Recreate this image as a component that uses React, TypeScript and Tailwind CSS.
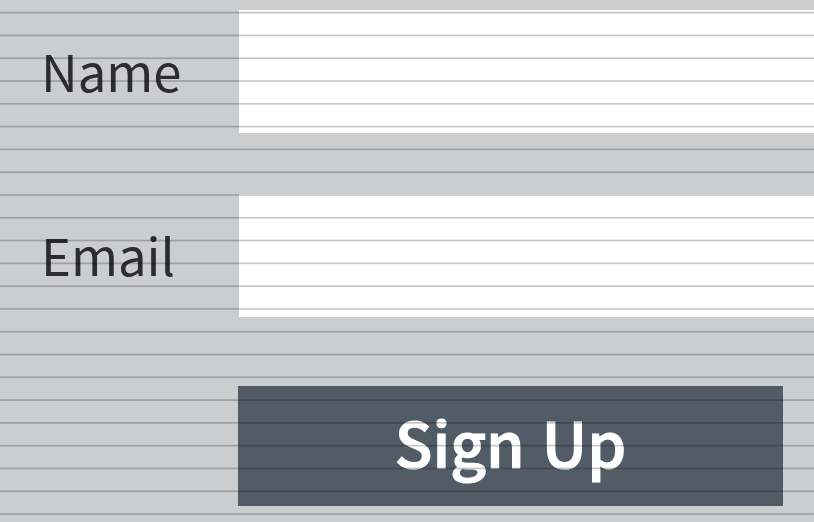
const labelClass =
  "flex w-[239px] shrink-0 items-center pb-[3px] pl-[41px] text-[50.8px] leading-none text-[#2d2d30]";

function Field({ id, label, className }: { id: string; label: string; className: string }) {
  return (
    <div className={`flex ${className}`}>
      <label htmlFor={id} className={labelClass}>
        {label}
      </label>
      <input id={id} type="text" className="min-w-0 flex-1 bg-white outline-none" />
    </div>
  );
}

export default function App() {
  return (
    <div className="relative h-[522px] w-[814px] overflow-hidden bg-[#cccdcf] font-['Noto_Sans_CJK_SC','Noto_Sans',sans-serif]">
      <form className="flex flex-col pt-[10px]">
        <Field id="name" label="Name" className="h-[123px]" />
        <Field id="email" label="Email" className="mt-[61px] h-[123px]" />
        <button
          type="button"
          className="mt-[69px] ml-[238px] h-[120px] w-[545px] bg-[#515c66] pb-[10px] text-[62px] leading-none font-medium text-white [-webkit-text-stroke:1.2px_white] [word-spacing:3px]"
        >
          Sign Up
        </button>
      </form>
      {/* Ruled lines over the whole form */}
      <div className="pointer-events-none absolute inset-x-0 top-[11px] bottom-0 bg-[repeating-linear-gradient(to_bottom,transparent_0px,transparent_0.3px,rgba(0,0,0,0.22)_1.3px,rgba(0,0,0,0.22)_2px,transparent_3px,transparent_22.79px)]" />
    </div>
  );
}
